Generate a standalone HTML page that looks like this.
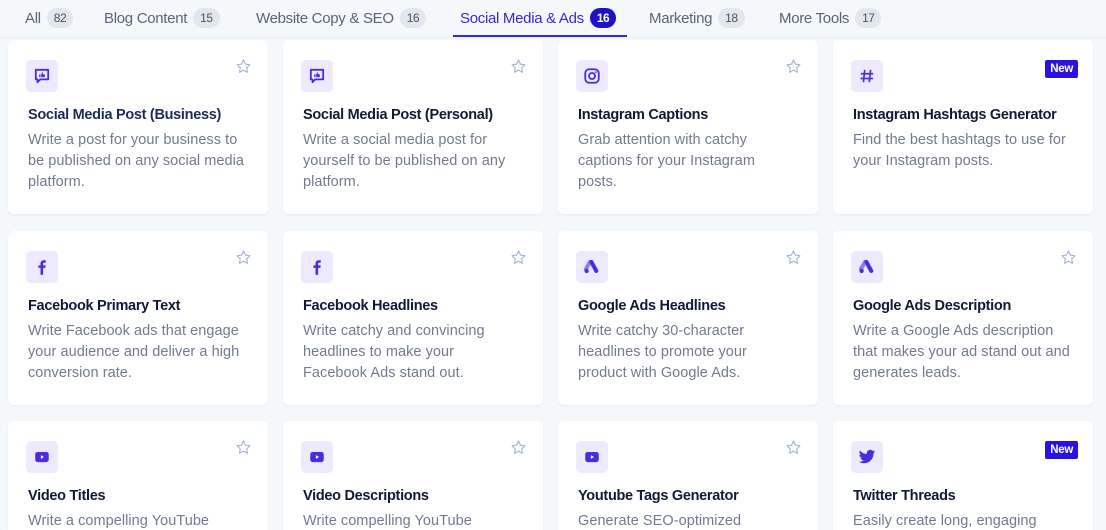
<!DOCTYPE html>
<html><head><meta charset="utf-8"><style>
*{margin:0;padding:0;box-sizing:border-box}
html,body{width:1106px;height:530px;overflow:hidden}
body{background:#f5f8fb;font-family:"Liberation Sans",sans-serif;position:relative}
.tabs{position:absolute;left:0;top:0;width:1106px;height:38px;border-bottom:1px solid #e8edf3}
.tab{position:absolute;top:8px;font-size:15px;color:#5a6478;letter-spacing:-0.3px;white-space:nowrap}
.b{display:inline-block;margin-left:6px;background:#e2e7ee;color:#4a5263;border-radius:11px;font-size:12px;padding:3px 7px;vertical-align:1px;letter-spacing:-0.5px}
.act{color:#3b24e0}
.act .b{background:#1f10cc;color:#fff;font-weight:bold}
.ul{position:absolute;left:453px;top:35px;width:174px;height:2px;background:#3b24e0}
.c{position:absolute;width:260px;height:174px;background:#fff;border-radius:6px;box-shadow:0 1px 2px rgba(20,30,60,.06);overflow:hidden}
.r3{height:109px;border-radius:6px 6px 0 0}
.ic{position:absolute;left:18px;top:20px;width:32px;height:32px;border-radius:5px;background:#ede9ff;display:flex;align-items:center;justify-content:center}
.st{position:absolute;right:16px;top:18px}
.t{position:absolute;left:20px;top:67px;font-size:14.5px;font-weight:bold;color:#101a33;letter-spacing:-0.3px;white-space:nowrap}
.d{position:absolute;left:20px;top:90px;width:218px;font-size:14.5px;line-height:21px;color:#717b8f;letter-spacing:0.05px}
.new{position:absolute;right:15px;top:20px;background:#2a12e3;color:#fff;font-size:11.5px;font-weight:bold;padding:3px 5px;border-radius:2px;letter-spacing:-0.3px}
</style></head><body>
<div class="tabs">
<div class="tab" style="left:25px">All<span class="b">82</span></div>
<div class="tab" style="left:104px">Blog Content<span class="b">15</span></div>
<div class="tab" style="left:256px">Website Copy &amp; SEO<span class="b">16</span></div>
<div class="tab act" style="left:460px">Social Media &amp; Ads<span class="b">16</span></div>
<div class="tab" style="left:649px">Marketing<span class="b">18</span></div>
<div class="tab" style="left:779px">More Tools<span class="b">17</span></div>
<div class="ul"></div>
</div>

<svg width="0" height="0" style="position:absolute"><defs>
<symbol id="star" viewBox="0 0 24 24"><path d="M12 2.8l2.8 5.8 6.3.9-4.6 4.4 1.1 6.3L12 17.2l-5.6 3 1.1-6.3L2.9 9.5l6.3-.9z" fill="none" stroke="#9fb0d0" stroke-width="1.5" stroke-linejoin="round"/></symbol>
<symbol id="chat" viewBox="0 0 16 16"><path d="M2.5 2.5h11v8.5h-7l-2.5 2.5v-2.5h-1.5z" fill="none" stroke="#4d2be0" stroke-width="1.6" stroke-linejoin="round"/><path d="M5.5 6.5h1.2v2.5h-1.2zM7.3 9V6.2l1.2-1.5.4.4-.2 1.3h1.8v2.6z" fill="#4d2be0"/></symbol>
<symbol id="ig" viewBox="0 0 16 16"><rect x="2" y="2" width="12" height="12" rx="3.5" fill="none" stroke="#4d2be0" stroke-width="1.6"/><circle cx="8" cy="8" r="2.7" fill="none" stroke="#4d2be0" stroke-width="1.6"/><circle cx="11.4" cy="4.6" r=".8" fill="#4d2be0"/></symbol>
<symbol id="hash" viewBox="0 0 16 16"><path d="M6 2.5L4.8 13.5M11.2 2.5L10 13.5M2.5 6h11M2.3 10.2h11" stroke="#4d2be0" stroke-width="1.5" fill="none"/></symbol>
<symbol id="fb" viewBox="0 0 16 16"><path d="M9 15V8.8h2l.3-2.3H9V5.2c0-.7.2-1.1 1.1-1.1h1.3V2.1C11.1 2 10.4 2 9.7 2 7.9 2 6.7 3 6.7 5v1.5H4.8v2.3h1.9V15z" fill="#4d2be0"/></symbol>
<symbol id="ga" viewBox="0 0 16 16"><path d="M6.2 3.5l-3.5 6.2" stroke="#8f7cf5" stroke-width="3.6" stroke-linecap="round"/><path d="M7.5 3.5l4.3 8" stroke="#4d2be0" stroke-width="3.6" stroke-linecap="round"/><circle cx="3.2" cy="11.5" r="1.9" fill="#4d2be0"/></symbol>
<symbol id="yt" viewBox="0 0 16 16"><rect x="2" y="3.5" width="12" height="9" rx="2.2" fill="#4d2be0"/><path d="M7 6.3v3.4L9.8 8z" fill="#fff"/></symbol>
<symbol id="tw" viewBox="0 0 24 24"><path d="M23 4.6a9 9 0 01-2.6.7 4.5 4.5 0 002-2.5 9 9 0 01-2.9 1.1 4.5 4.5 0 00-7.7 4.1A12.8 12.8 0 012.5 3.3a4.5 4.5 0 001.4 6 4.5 4.5 0 01-2-.6 4.5 4.5 0 003.6 4.5 4.5 4.5 0 01-2 .1 4.5 4.5 0 004.2 3.1A9 9 0 011 18.3a12.8 12.8 0 006.9 2c8.3 0 12.8-6.9 12.8-12.8v-.6A9 9 0 0023 4.6z" fill="#4d2be0"/></symbol>
</defs></svg>

<div class="c" style="left:8px;top:40px"><div class="ic"><svg width="18" height="18"><use href="#chat"/></svg></div><svg class="st" width="17" height="17"><use href="#star"/></svg><div class="t" style="color:#1d2c57">Social Media Post (Business)</div><div class="d">Write a post for your business to be published on any social media platform.</div></div>
<div class="c" style="left:283px;top:40px"><div class="ic"><svg width="18" height="18"><use href="#chat"/></svg></div><svg class="st" width="17" height="17"><use href="#star"/></svg><div class="t">Social Media Post (Personal)</div><div class="d" style="width:205px">Write a social media post for yourself to be published on any platform.</div></div>
<div class="c" style="left:558px;top:40px"><div class="ic"><svg width="18" height="18"><use href="#ig"/></svg></div><svg class="st" width="17" height="17"><use href="#star"/></svg><div class="t">Instagram Captions</div><div class="d" style="width:200px">Grab attention with catchy captions for your Instagram posts.</div></div>
<div class="c" style="left:833px;top:40px"><div class="ic"><svg width="18" height="18"><use href="#hash"/></svg></div><div class="new">New</div><div class="t">Instagram Hashtags Generator</div><div class="d">Find the best hashtags to use for your Instagram posts.</div></div>

<div class="c" style="left:8px;top:231px"><div class="ic"><svg width="18" height="18"><use href="#fb"/></svg></div><svg class="st" width="17" height="17"><use href="#star"/></svg><div class="t">Facebook Primary Text</div><div class="d">Write Facebook ads that engage your audience and deliver a high conversion rate.</div></div>
<div class="c" style="left:283px;top:231px"><div class="ic"><svg width="18" height="18"><use href="#fb"/></svg></div><svg class="st" width="17" height="17"><use href="#star"/></svg><div class="t">Facebook Headlines</div><div class="d" style="width:200px">Write catchy and convincing headlines to make your Facebook Ads stand out.</div></div>
<div class="c" style="left:558px;top:231px"><div class="ic"><svg width="18" height="18"><use href="#ga"/></svg></div><svg class="st" width="17" height="17"><use href="#star"/></svg><div class="t">Google Ads Headlines</div><div class="d" style="width:200px">Write catchy 30-character headlines to promote your product with Google Ads.</div></div>
<div class="c" style="left:833px;top:231px"><div class="ic"><svg width="18" height="18"><use href="#ga"/></svg></div><svg class="st" width="17" height="17"><use href="#star"/></svg><div class="t">Google Ads Description</div><div class="d">Write a Google Ads description that makes your ad stand out and generates leads.</div></div>

<div class="c r3" style="left:8px;top:421px"><div class="ic"><svg width="18" height="18"><use href="#yt"/></svg></div><svg class="st" width="17" height="17"><use href="#star"/></svg><div class="t">Video Titles</div><div class="d">Write a compelling YouTube video title.</div></div>
<div class="c r3" style="left:283px;top:421px"><div class="ic"><svg width="18" height="18"><use href="#yt"/></svg></div><svg class="st" width="17" height="17"><use href="#star"/></svg><div class="t">Video Descriptions</div><div class="d">Write compelling YouTube descriptions.</div></div>
<div class="c r3" style="left:558px;top:421px"><div class="ic"><svg width="18" height="18"><use href="#yt"/></svg></div><svg class="st" width="17" height="17"><use href="#star"/></svg><div class="t">Youtube Tags Generator</div><div class="d">Generate SEO-optimized YouTube tags.</div></div>
<div class="c r3" style="left:833px;top:421px"><div class="ic"><svg width="18" height="18"><use href="#tw"/></svg></div><div class="new">New</div><div class="t">Twitter Threads</div><div class="d">Easily create long, engaging threads.</div></div>
</body></html>
